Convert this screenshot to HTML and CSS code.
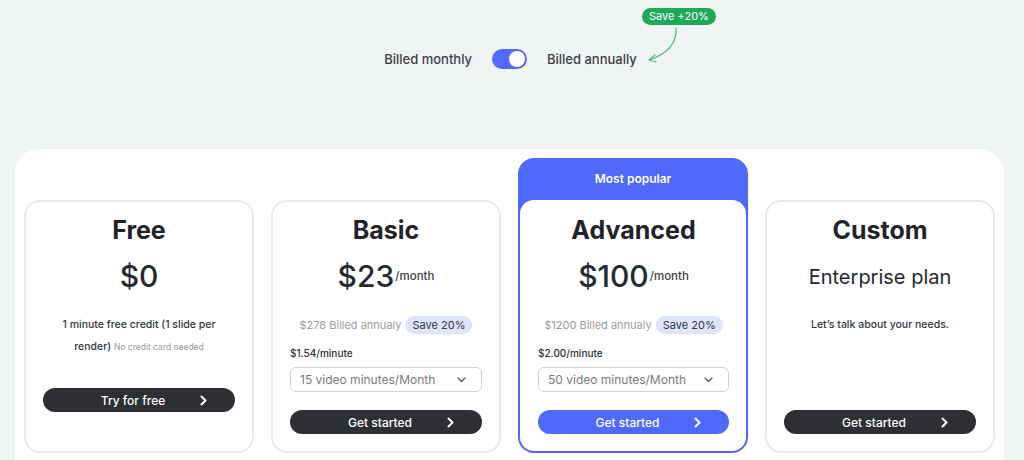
FILE: index.html
```html
<!DOCTYPE html>
<html>
<head>
<meta charset="utf-8">
<link rel="stylesheet" href="styles.css">
</head>
<body>
<div class="top">
  <div class="billing">
    <span class="bill-label">Billed monthly</span>
    <span class="toggle"><span class="knob"></span></span>
    <span class="bill-label annual">Billed annually
      <span class="save-badge">Save +20%</span>
      <svg class="arrow" width="40" height="40" viewBox="0 0 40 40" fill="none" stroke="#4cbf7a" stroke-width="1.2" stroke-linecap="round" stroke-linejoin="round">
        <path d="M33 1 C34 16 24 27 6 33"/>
        <path d="M12 28 L6 33 L13 35"/>
      </svg>
    </span>
  </div>
</div>
<div class="panel">
  <div class="cards">
    <div class="card">
      <div class="title">Free</div>
      <div class="price">$0</div>
      <p class="desc">1 minute free credit (1 slide per render) <span class="small">No credit card needed</span></p>
      <button class="btn dark free-btn"><span class="btn-text">Try for free</span><span class="chev"><svg width="7" height="11" viewBox="0 0 7 11"><path d="M1.5 1.5 L5.5 5.5 L1.5 9.5" fill="none" stroke="#fff" stroke-width="2" stroke-linecap="round" stroke-linejoin="round"/></svg></span></button>
    </div>
    <div class="card">
      <div class="title">Basic</div>
      <div class="price">$23<span class="per">/month</span></div>
      <div class="billed"><span class="annual-txt">$278 Billed annualy</span><span class="save">Save 20%</span></div>
      <div class="rate">$1.54/minute</div>
      <div class="select"><span>15 video minutes/Month</span><svg width="9" height="6" viewBox="0 0 9 6"><path d="M1 1 L4.5 4.5 L8 1" fill="none" stroke="#555" stroke-width="1.2" stroke-linecap="round" stroke-linejoin="round"/></svg></div>
      <button class="btn dark"><span class="btn-text">Get started</span><span class="chev"><svg width="7" height="11" viewBox="0 0 7 11"><path d="M1.5 1.5 L5.5 5.5 L1.5 9.5" fill="none" stroke="#fff" stroke-width="2" stroke-linecap="round" stroke-linejoin="round"/></svg></span></button>
    </div>
    <div class="popular">
      <div class="popular-head">Most popular</div>
      <div class="card inner">
        <div class="title">Advanced</div>
        <div class="price">$100<span class="per">/month</span></div>
        <div class="billed"><span class="annual-txt">$1200 Billed annualy</span><span class="save">Save 20%</span></div>
        <div class="rate">$2.00/minute</div>
        <div class="select"><span>50 video minutes/Month</span><svg width="9" height="6" viewBox="0 0 9 6"><path d="M1 1 L4.5 4.5 L8 1" fill="none" stroke="#555" stroke-width="1.2" stroke-linecap="round" stroke-linejoin="round"/></svg></div>
        <button class="btn blue"><span class="btn-text">Get started</span><span class="chev"><svg width="7" height="11" viewBox="0 0 7 11"><path d="M1.5 1.5 L5.5 5.5 L1.5 9.5" fill="none" stroke="#fff" stroke-width="2" stroke-linecap="round" stroke-linejoin="round"/></svg></span></button>
      </div>
    </div>
    <div class="card">
      <div class="title">Custom</div>
      <div class="price enterprise">Enterprise plan</div>
      <p class="desc">Let’s talk about your needs.</p>
      <button class="btn dark bottom"><span class="btn-text">Get started</span><span class="chev"><svg width="7" height="11" viewBox="0 0 7 11"><path d="M1.5 1.5 L5.5 5.5 L1.5 9.5" fill="none" stroke="#fff" stroke-width="2" stroke-linecap="round" stroke-linejoin="round"/></svg></span></button>
    </div>
  </div>
</div>
</body>
</html>
```

FILE: styles.css
```css
* { box-sizing: border-box; }
html, body { margin: 0; padding: 0; }
body {
  width: 1024px;
  height: 460px;
  overflow: hidden;
  background: #f1f4f5;
  font-family: Inter, "Noto Sans", sans-serif;
  color: #1f2328;
}
.top {
  height: 149px;
  padding-top: 49px;
}
.billing {
  display: flex;
  justify-content: center;
  align-items: center;
  gap: 20px;
  padding-right: 3px;
}
.bill-label {
  font-size: 13px;
  font-weight: 500;
  color: #3d4046;
  line-height: 20px;
}
.annual { position: relative; }
.toggle {
  width: 35px;
  height: 20px;
  border-radius: 10px;
  background: #5468ff;
  display: flex;
  align-items: center;
  justify-content: flex-end;
  padding: 0 2px;
}
.knob {
  width: 16px;
  height: 16px;
  border-radius: 50%;
  background: #fff;
}
.save-badge {
  position: absolute;
  left: 95px;
  top: -41px;
  background: #1fa75a;
  color: #fff;
  font-size: 11px;
  font-weight: 400;
  line-height: 17px;
  padding: 0 7px;
  border-radius: 9px;
  white-space: nowrap;
}
.arrow {
  position: absolute;
  left: 96px;
  top: -22px;
}
.panel {
  margin-left: 15px;
  width: 989px;
  background: #fff;
  border-radius: 24px 24px 0 0;
  padding: 9px 9px 9px;
}
.cards {
  display: flex;
  align-items: flex-end;
  gap: 17px;
}
.card {
  width: 230px;
  height: 253px;
  border: 2px solid #e9e9e9;
  border-radius: 16px;
  background: #fff;
  padding: 12px 17px 17px;
  display: flex;
  flex-direction: column;
  align-items: stretch;
  text-align: center;
}
.popular {
  width: 230px;
  height: 295px;
  background: #5068fb;
  border-radius: 16px;
  padding: 0 2px 2px;
  display: flex;
  flex-direction: column;
}
.popular-head {
  height: 42px;
  line-height: 42px;
  color: #fff;
  font-size: 12px;
  font-weight: 600;
  text-align: center;
}
.card.inner {
  width: 226px;
  height: auto;
  flex: 1;
  border: none;
  border-radius: 14px;
  padding: 14px 17px 17px 18px;
}
.title {
  font-size: 25px;
  font-weight: 700;
  line-height: 32px;
  color: #1f2328;
}
.price {
  margin-top: 12px;
  height: 36px;
  display: flex;
  align-items: center;
  justify-content: center;
  font-size: 30px;
  font-weight: 500;
  color: #24292f;
}
.per {
  font-size: 11.5px;
  font-weight: 500;
  margin-left: 1px;
  color: #3a3d42;
}
.price.enterprise {
  font-size: 20px;
  font-weight: 400;
  padding-top: 2px;
}
.desc {
  margin: 20px 0 0;
  font-size: 10.5px;
  font-weight: 500;
  line-height: 22px;
  color: #33363b;
  padding: 0 9px;
}
.small {
  font-size: 8.5px;
  font-weight: 400;
  color: #9a9a9a;
}
.billed {
  margin-top: 20px;
  height: 22px;
  display: flex;
  align-items: center;
  justify-content: center;
  gap: 4px;
  font-size: 11px;
}
.annual-txt { color: #9b9b9b; }
.save {
  background: #dfe4fd;
  color: #33363b;
  border-radius: 9px;
  padding: 0 7px;
  line-height: 18px;
}
.rate {
  margin-top: 10px;
  line-height: 14px;
  font-size: 10px;
  font-weight: 500;
  text-align: left;
  color: #2d3035;
}
.select {
  margin-top: 7px;
  height: 25px;
  border: 1px solid #cfcfcf;
  border-radius: 6px;
  display: flex;
  align-items: center;
  justify-content: space-between;
  padding: 0 15px 0 9px;
  font-size: 12px;
  color: #7a7a7a;
}
.btn {
  margin-top: 18px;
  height: 24px;
  border: none;
  border-radius: 12px;
  display: grid;
  grid-template-columns: 1fr auto 1fr;
  align-items: center;
  padding: 0 28px 0 16px;
  font-family: inherit;
  font-size: 12px;
  font-weight: 500;
  color: #fff;
  cursor: pointer;
}
.btn-text { grid-column: 2; }
.chev {
  grid-column: 3;
  justify-self: end;
  display: flex;
  align-items: center;
}
.dark { background: #2d2f34; }
.blue { background: #5068fb; }
.free-btn { margin-top: 30px; }
.bottom { margin-top: auto; }
```
